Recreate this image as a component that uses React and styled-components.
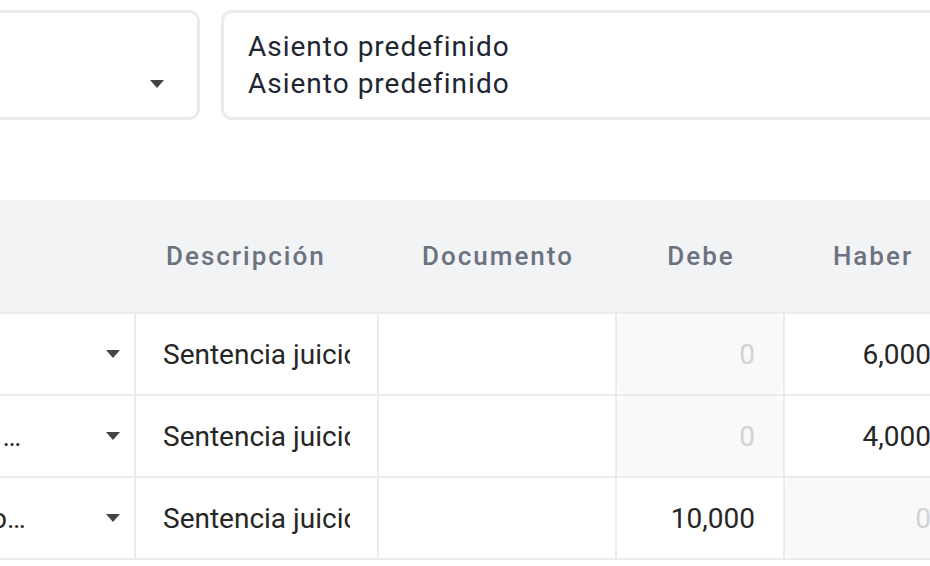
import React from "react";
import styled, { createGlobalStyle } from "styled-components";

const GlobalStyle = createGlobalStyle`
  html, body {
    margin: 0;
    padding: 0;
    overflow: hidden;
    background: #ffffff;
  }
  body {
    font-family: Roboto, "Liberation Sans", sans-serif;
  }
  * {
    box-sizing: border-box;
  }
`;

// the page is wider than the window and shifted left, like the cropped screen
const Page = styled.div`
  width: 1500px;
  margin-left: -300px;
  padding-top: 10px;
`;

const TopRow = styled.div`
  display: flex;
  gap: 21px;
  margin-bottom: 80px;
`;

const Field = styled.div`
  width: ${(p) => p.$width || "auto"};
  flex: ${(p) => (p.$width ? "none" : "1")};
  height: 110px;
  border: 3px solid #ebebeb;
  border-radius: 11px;
  padding: 0 33px 0 24px;
  display: flex;
  flex-direction: column;
  justify-content: center;
  font-size: 28px;
  line-height: 37px;
  letter-spacing: 1px;
  color: #1e2533;
`;

const FieldLine = styled.div`
  display: flex;
  align-items: center;
  justify-content: space-between;
  height: 37px;
  white-space: nowrap;
`;

const Caret = styled.span`
  flex: none;
  margin-left: auto;
  width: 0;
  height: 0;
  border-left: 7.5px solid transparent;
  border-right: 7.5px solid transparent;
  border-top: 8px solid #444444;
`;

const Grid = styled.div`
  display: grid;
  grid-template-columns: 436px 243px 238px 168px 176px 1fr;
`;

const HeadCell = styled.div`
  height: 114px;
  background: #f2f3f5;
  border-bottom: 2px solid #ebebeb;
  display: flex;
  align-items: center;
  justify-content: ${(p) => p.$align || "center"};
  padding: 0 28px 0 ${(p) => (p.$align ? "30px" : "28px")};
  font-size: 26px;
  font-weight: 500;
  letter-spacing: 2px;
  color: #6b7280;
  white-space: nowrap;
`;

const Cell = styled.div`
  height: 82px;
  border-bottom: 2px solid #ebebeb;
  border-right: ${(p) => (p.$last ? "none" : "2px solid #ebebeb")};
  display: flex;
  align-items: center;
  min-width: 0;
`;

const AccountSelect = styled.div`
  flex: 1;
  min-width: 0;
  height: 100%;
  display: flex;
  align-items: center;
  padding: 0 14px 0 13px;
  font-size: 28px;
  color: #262626;
`;

const AccountText = styled.span`
  flex: 1;
  min-width: 0;
  margin-right: 77px;
  overflow: hidden;
  white-space: nowrap;
  text-overflow: ellipsis;
`;

const TextInput = styled.input`
  width: 100%;
  height: 100%;
  border: none;
  outline: none;
  background: transparent;
  padding: 0 27px;
  font-family: Roboto, "Liberation Sans", sans-serif;
  font-size: 28px;
  color: #262626;
`;

const AmountInput = styled.input`
  width: 100%;
  height: 100%;
  border: none;
  outline: none;
  border-radius: 8px;
  padding: 0 28px;
  text-align: right;
  font-family: Roboto, "Liberation Sans", sans-serif;
  font-size: 28px;
  background: ${(p) => (p.disabled ? "#f9f9f9" : "transparent")};
  color: ${(p) => (p.disabled ? "#d2d2d2" : "#262626")};
  &:disabled {
    -webkit-text-fill-color: #d2d2d2;
    opacity: 1;
  }
`;

const rows = [
  { account: "1102 - Bancos", debe: 0, haber: "6,000" },
  { account: "2105 - Provisiones con terceros", debe: 0, haber: "4,000" },
  { account: "5110 - Gastos por juicio laboral", debe: "10,000", haber: 0 },
];

function Amount({ value }) {
  const empty = value === 0;
  return <AmountInput disabled={empty} readOnly value={empty ? "0" : value} />;
}

export default function App() {
  return (
    <>
      <GlobalStyle />
      <Page>
        <TopRow>
          <Field $width="500px">
            <FieldLine />
            <FieldLine>
              <Caret />
            </FieldLine>
          </Field>
          <Field>
            <FieldLine>Asiento predefinido</FieldLine>
            <FieldLine>Asiento predefinido</FieldLine>
          </Field>
        </TopRow>

        <Grid>
          <HeadCell />
          <HeadCell $align="flex-start">Descripción</HeadCell>
          <HeadCell>Documento</HeadCell>
          <HeadCell>Debe</HeadCell>
          <HeadCell>Haber</HeadCell>
          <HeadCell />

          {rows.map((r, i) => (
            <React.Fragment key={i}>
              <Cell>
                <AccountSelect>
                  <AccountText>{r.account}</AccountText>
                  <Caret />
                </AccountSelect>
              </Cell>
              <Cell>
                <TextInput readOnly value="Sentencia juicio laboral" />
              </Cell>
              <Cell>
                <TextInput readOnly value="" />
              </Cell>
              <Cell>
                <Amount value={r.debe} />
              </Cell>
              <Cell>
                <Amount value={r.haber} />
              </Cell>
              <Cell $last />
            </React.Fragment>
          ))}
        </Grid>
      </Page>
    </>
  );
}
